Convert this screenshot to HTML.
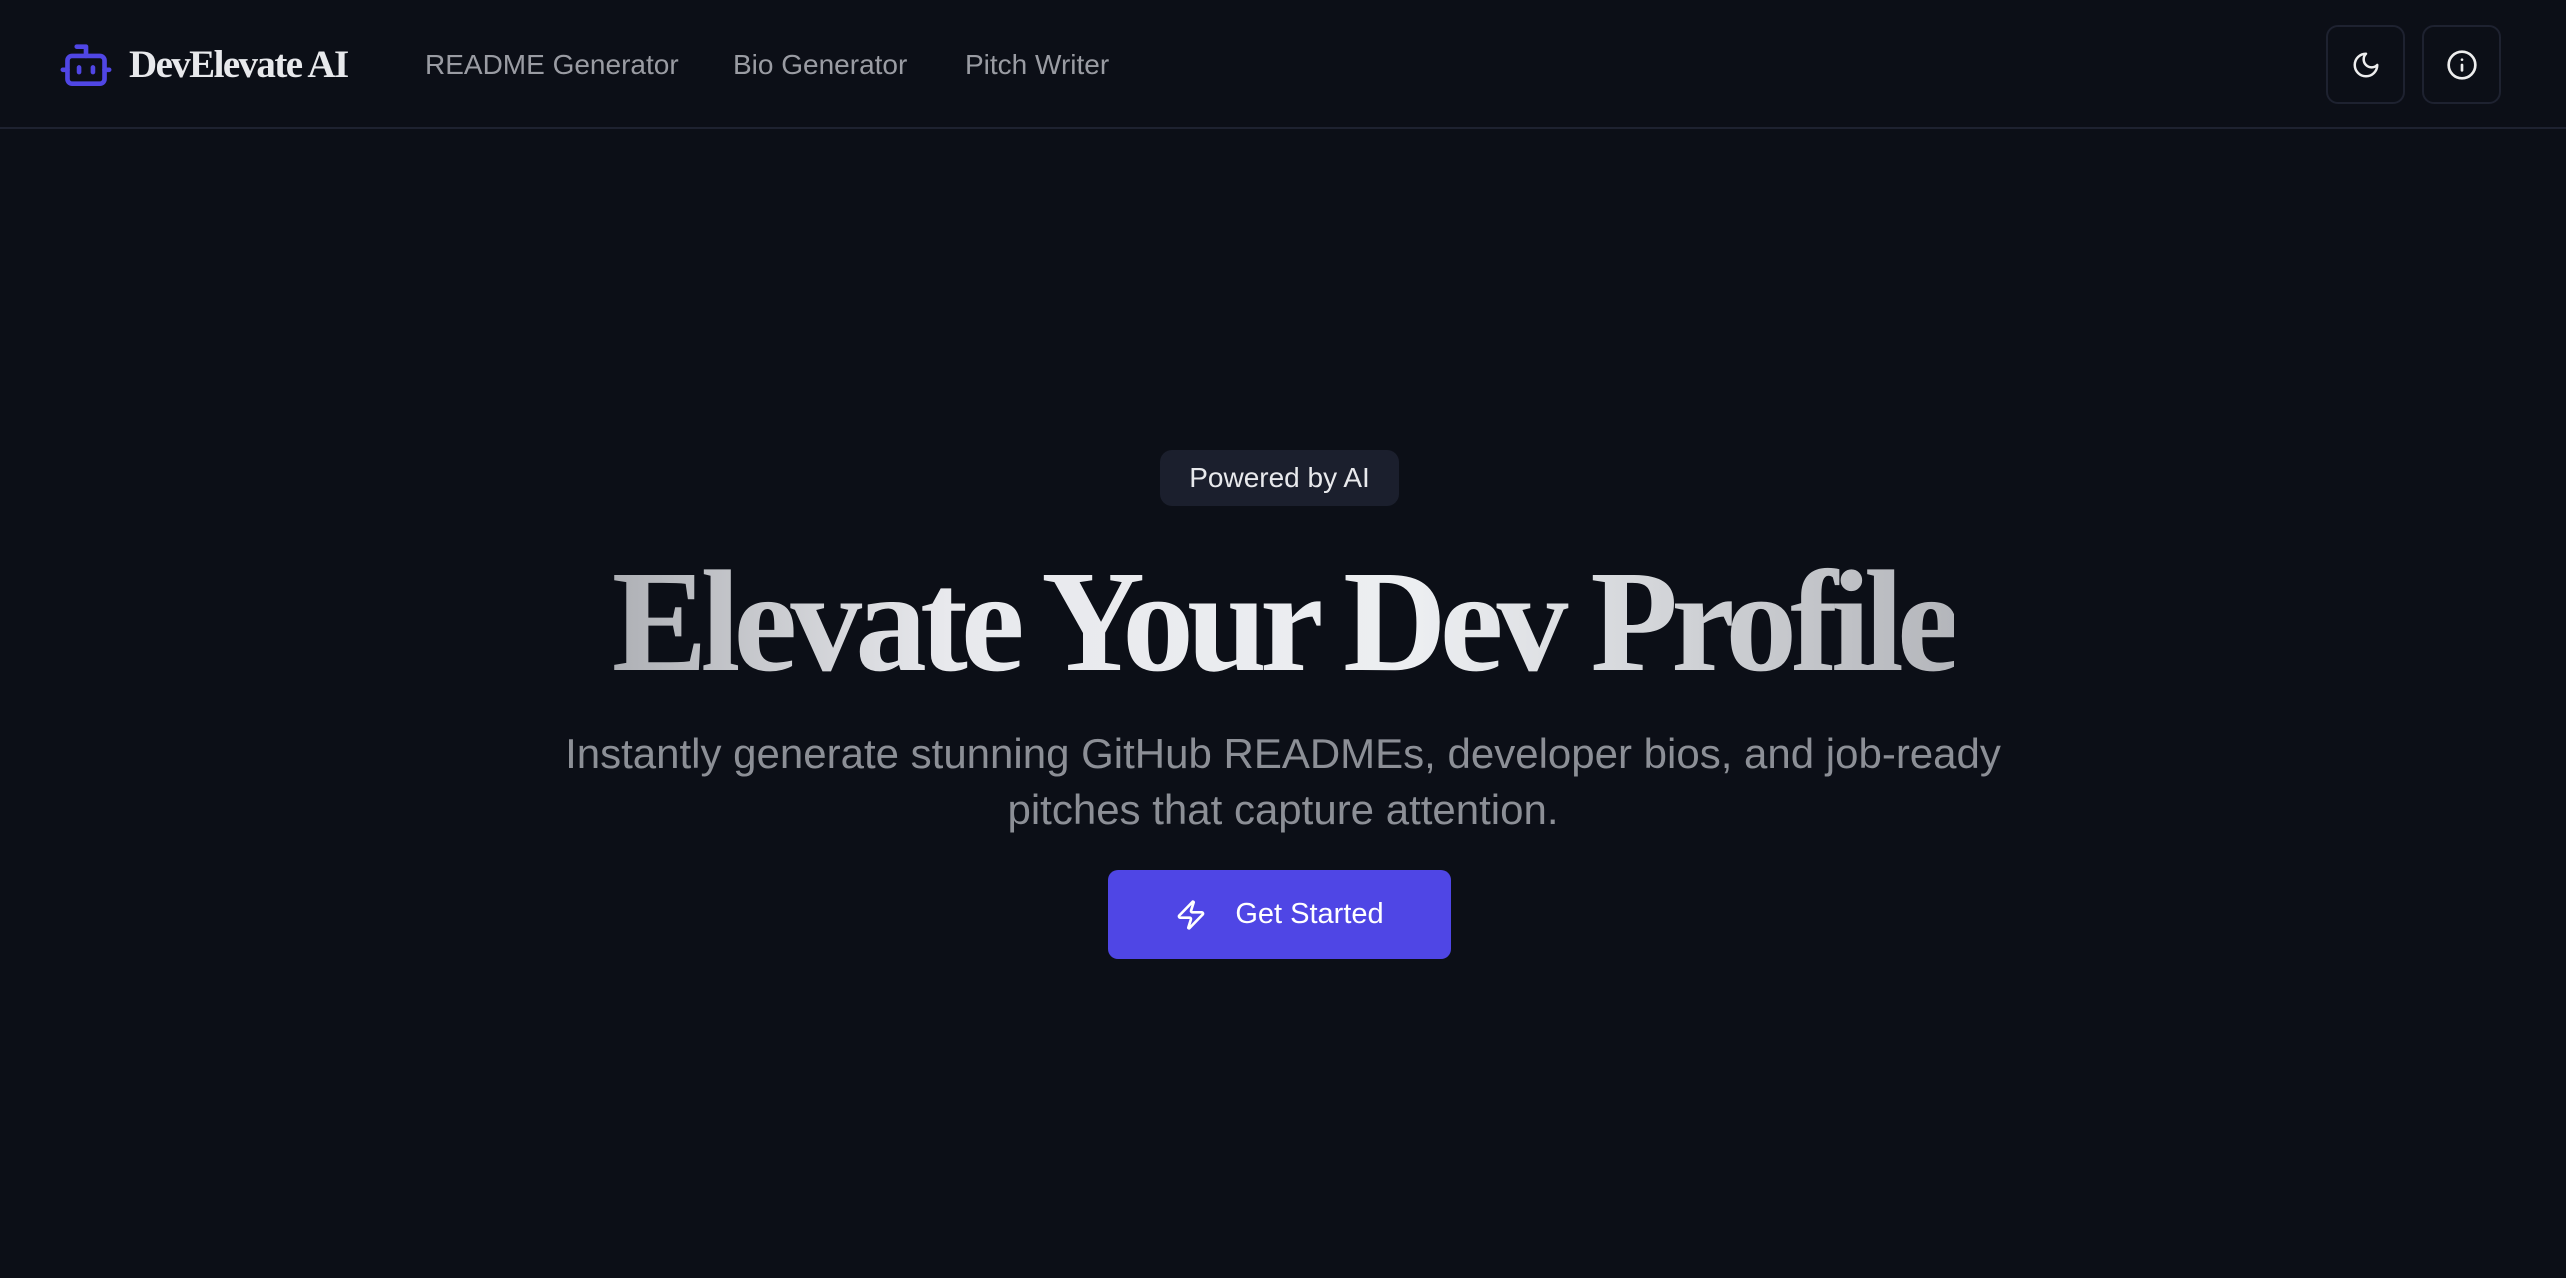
<!DOCTYPE html>
<html><head><meta charset="utf-8"><style>
*{margin:0;padding:0;box-sizing:border-box}
html,body{width:2566px;height:1278px;background:#0c0f17;overflow:hidden;font-family:"Liberation Sans",sans-serif}
header{position:absolute;left:0;top:0;width:2566px;height:129px;border-bottom:2px solid #1e2230}
.logo{position:absolute;left:60px;top:42px}
.brand{position:absolute;left:129px;top:42px;font-family:"Liberation Serif",serif;font-weight:bold;font-size:39px;color:#e8e9ec;letter-spacing:-1.6px}
.nav{position:absolute;top:49px;font-size:28px;color:#9a9ca3}
.ib{position:absolute;top:25px;width:79px;height:79px;border:2px solid #1e2230;border-radius:12px;display:flex;align-items:center;justify-content:center}
.badge{position:absolute;left:1160px;top:450px;width:239px;height:56px;background:#1b1f2d;border-radius:12px;color:#e8e9ec;font-size:28px;text-align:center;line-height:56px}
h1{position:absolute;left:0;width:2566px;top:537px;text-align:center;font-family:"Liberation Serif",serif;font-weight:bold;font-size:145px;line-height:170px;letter-spacing:-7px;white-space:nowrap}
h1 span{display:inline-block;transform:scaleX(0.99);background:linear-gradient(90deg,#aeb0b5,#e8e9ed 25%,#eceef1 60%,#b4b6bb);-webkit-background-clip:text;background-clip:text;color:transparent}
.sub{position:absolute;left:0;width:2566px;top:726px;text-align:center;font-size:42px;line-height:56px;color:#8c8f96}
.btn{position:absolute;left:1108px;top:870px;width:343px;height:89px;background:#4f46e5;border-radius:10px;color:#fff;font-size:29px;display:flex;align-items:center;justify-content:center;gap:28px}
</style></head><body>
<header>
<svg class="logo" width="52" height="44" viewBox="1 2 22 19" fill="none" stroke="#5046e5" stroke-width="2" stroke-linecap="round" stroke-linejoin="round"><path d="M12 8V4H8"/><rect x="4" y="8" width="16" height="12" rx="2"/><path d="M2 14h2M20 14h2M15 13v2M9 13v2"/></svg>
<div class="brand">DevElevate AI</div>
<div class="nav" style="left:425px">README Generator</div>
<div class="nav" style="left:733px">Bio Generator</div>
<div class="nav" style="left:965px">Pitch Writer</div>
<div class="ib" style="left:2326px"><svg width="30" height="30" viewBox="0 0 24 24" fill="none" stroke="#eee" stroke-width="2" stroke-linecap="round" stroke-linejoin="round"><path d="M12 3a6 6 0 0 0 9 9 9 9 0 1 1-9-9Z"/></svg></div>
<div class="ib" style="left:2422px"><svg width="32" height="32" viewBox="0 0 24 24" fill="none" stroke="#eee" stroke-width="2" stroke-linecap="round" stroke-linejoin="round"><circle cx="12" cy="12" r="10"/><path d="M12 16v-4M12 8h.01"/></svg></div>
</header>
<div class="badge">Powered by AI</div>
<h1><span>Elevate Your Dev Profile</span></h1>
<div class="sub">Instantly generate stunning GitHub READMEs, developer bios, and job-ready<br>pitches that capture attention.</div>
<div class="btn"><svg width="32" height="32" viewBox="0 0 24 24" fill="none" stroke="#fff" stroke-width="2" stroke-linecap="round" stroke-linejoin="round"><path d="M4 14a1 1 0 0 1-.78-1.63l9.9-10.2a.5.5 0 0 1 .86.46l-1.92 6.02A1 1 0 0 0 13 10h7a1 1 0 0 1 .78 1.63l-9.9 10.2a.5.5 0 0 1-.86-.46l1.92-6.02A1 1 0 0 0 11 14z"/></svg><span>Get Started</span></div>
</body></html>
